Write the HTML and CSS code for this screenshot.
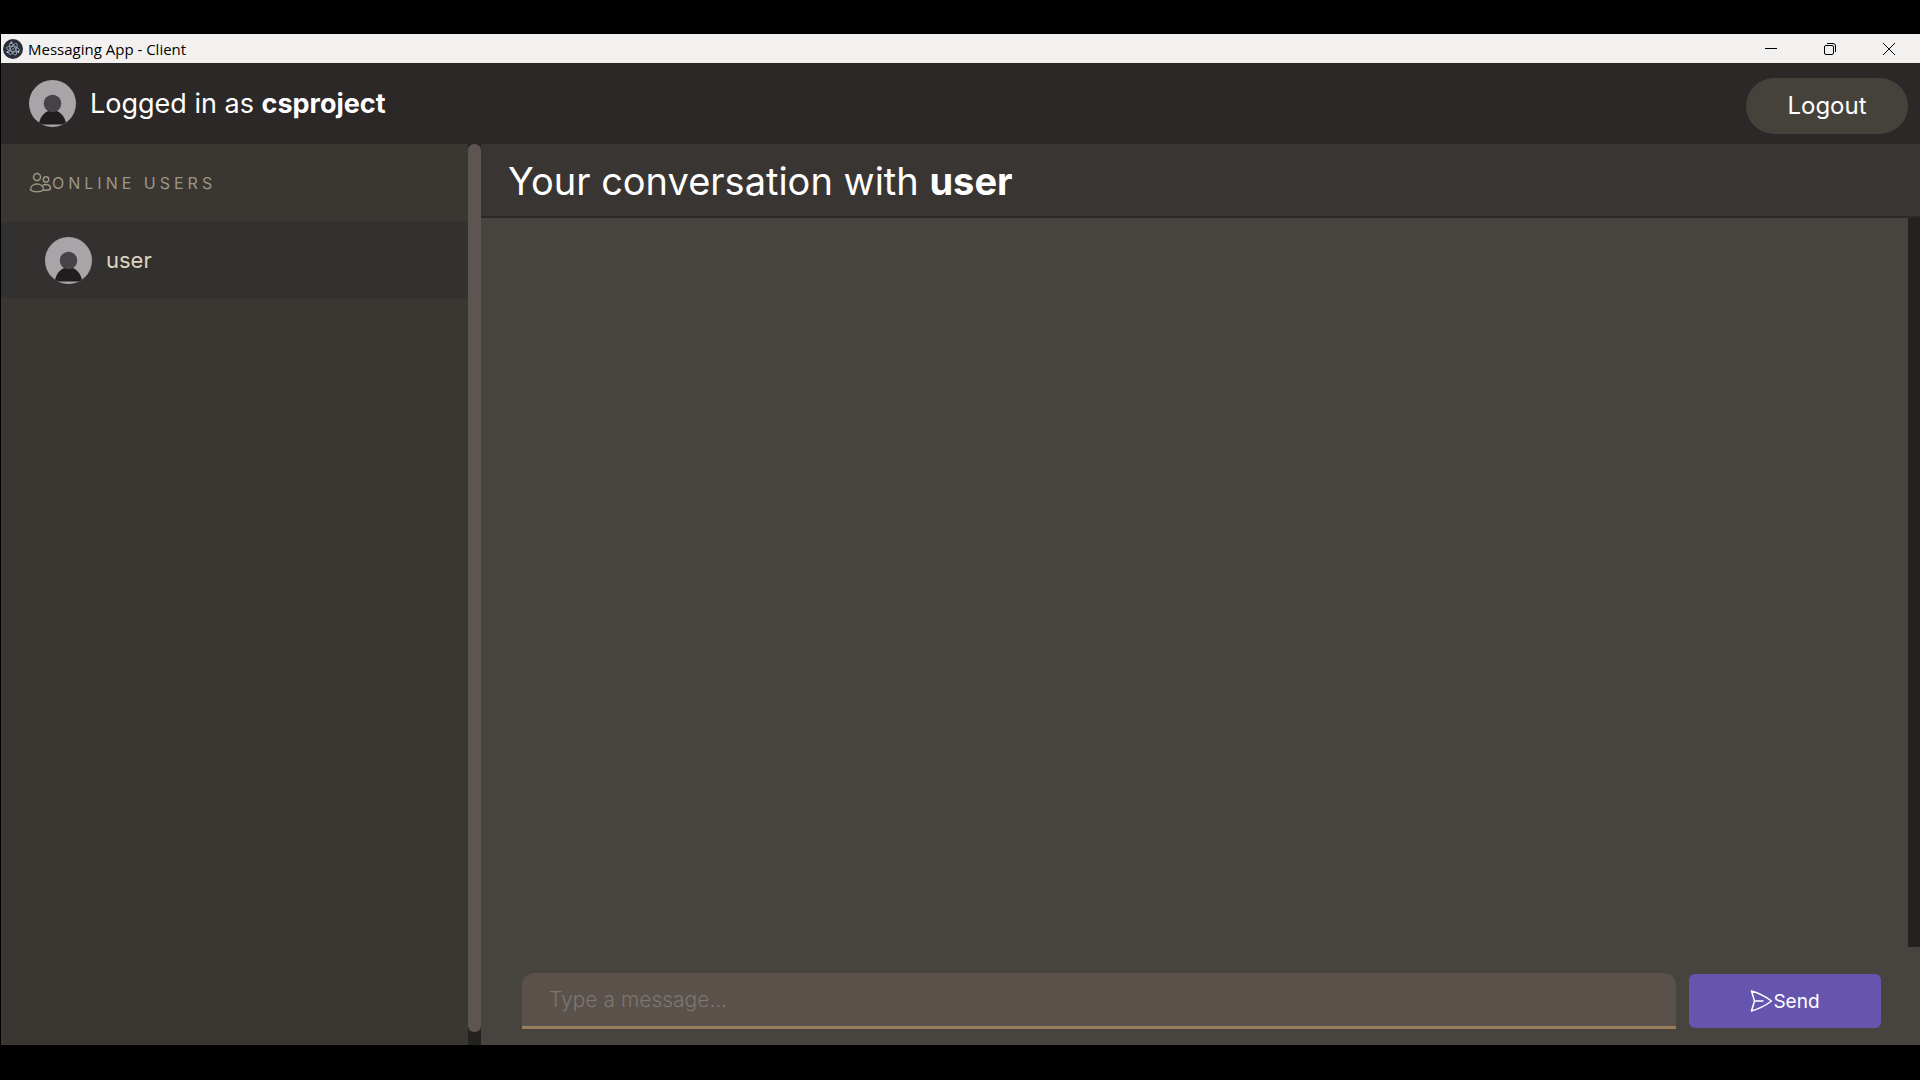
FILE: index.html
```html
<!DOCTYPE html>
<html lang="en">
<head>
<meta charset="utf-8">
<title>Messaging App - Client</title>
<link rel="stylesheet" href="styles.css">
</head>
<body>
<svg class="defs" aria-hidden="true">
  <symbol id="avatar" viewBox="0 0 48 48">
    <clipPath id="disc"><circle cx="24" cy="24" r="24"/></clipPath>
    <g clip-path="url(#disc)">
      <rect width="48" height="48" fill="#a8a5a9"/>
      <path d="M10 45.500C11 37 17 31 24 31s13 6 14 14.500z" fill="#211d1f"/>
      <circle cx="24" cy="24" r="9" fill="#454345"/>
    </g>
  </symbol>
</svg>
<div class="window">
  <div class="titlebar">
    <svg class="app-icon" viewBox="0 0 20 20" aria-hidden="true">
      <circle cx="10" cy="10" r="10" fill="#2b2e3a"/>
      <g fill="none" stroke="#9fb4bc" stroke-width="0.8">
        <ellipse cx="10" cy="10" rx="6.500" ry="2.600" transform="rotate(10 10 10)"/>
        <ellipse cx="10" cy="10" rx="6.500" ry="2.600" transform="rotate(65 10 10)"/>
        <ellipse cx="10" cy="10" rx="6.500" ry="2.600" transform="rotate(125 10 10)"/>
      </g>
      <g fill="#b9cbd1"><circle cx="10" cy="10" r="0.800"/><circle cx="4.500" cy="13" r="1"/><circle cx="15.500" cy="13" r="1"/><circle cx="8.500" cy="3.500" r="1"/></g>
    </svg>
    <span class="app-name">Messaging App - Client</span>
    <button class="window-button" aria-label="Minimize"><svg viewBox="0 0 14 14"><path d="M1 6.500h12"/></svg></button>
    <button class="window-button" aria-label="Restore"><svg viewBox="0 0 14 14"><rect x="1.500" y="3.500" width="9" height="9" rx="1.500"/><path d="M4 1.500h6a2.500 2.500 0 0 1 2.500 2.500v6"/></svg></button>
    <button class="window-button" aria-label="Close"><svg viewBox="0 0 14 14"><path d="M1 1l12 12M13 1L1 13"/></svg></button>
  </div>
  <header class="topbar">
    <svg class="avatar" aria-hidden="true"><use href="#avatar"/></svg>
    <span class="account">Logged in as <strong>csproject</strong></span>
    <button class="logout">Logout</button>
  </header>
  <div class="content">
    <aside class="sidebar">
      <h2 class="sidebar-title">
        <svg class="icon" viewBox="0 0 22 22" aria-hidden="true">
          <circle cx="7.500" cy="5" r="3.500"/>
          <path d="M1 18c0-3.500 2.500-6 6.500-6s6.500 2.500 6.500 6c-1.500 1.300-4 1.700-6.500 1.700S2.500 19.300 1 18z"/>
          <circle cx="16.500" cy="7.500" r="2.700"/>
          <path d="M12.800 13.800c1-.9 2.200-1.300 3.700-1.300 2.700 0 4.500 1.800 4.500 4.700-1.500 1-4 1.300-6.900 1"/>
        </svg>Online Users
      </h2>
      <a class="user-row" href="#user">
        <svg class="avatar" aria-hidden="true"><use href="#avatar"/></svg>
        <span>user</span>
      </a>
    </aside>
    <div class="sidebar-scroll"><div class="thumb"></div></div>
    <main class="chat">
      <h1 class="chat-title">Your conversation with <strong>user</strong></h1>
      <div class="messages"><div class="messages-track"></div></div>
      <form class="composer">
        <input class="message-input" type="text" placeholder="Type a message..." aria-label="Message">
        <button class="send" type="button">
          <svg class="icon" viewBox="0 0 22 22" aria-hidden="true"><path d="M1 1C8 3 15 6.500 21 11 15 15.500 8 19 1 21c1-3.500 2-6.500 3-10C3 7.500 2 4.500 1 1zM4 11h9"/></svg>Send
        </button>
      </form>
    </main>
  </div>
</div>
</body>
</html>
```
FILE: styles.css
```css
* {
  box-sizing: border-box;
}

body {
  display: flex;
  min-height: 100vh;
  margin: 0;
  padding: 34px 0 35px;
  background: #000;
  color: #fff;
  font-family: Inter, "Liberation Sans", sans-serif;
}

button,
input {
  border: 0;
  font-family: inherit;
}

.defs {
  position: absolute;
  width: 0;
  height: 0;
}

.window {
  flex: 1;
  display: flex;
  flex-direction: column;
  min-width: 0;
  padding-left: 1px;
}

.titlebar {
  display: flex;
  align-items: center;
  height: 29px;
  padding: 0 2px;
  background: #f3f1ef;
  color: #000;
  font: 15px/20px "Open Sans", sans-serif;
}

.app-icon {
  width: 20px;
  height: 20px;
}

.app-name {
  flex: 1;
  padding-left: 5px;
}

.window-button {
  display: flex;
  align-items: center;
  justify-content: center;
  width: 59px;
  height: 29px;
  padding: 0;
  background: none;
}

.window-button svg {
  width: 14px;
  height: 14px;
  fill: none;
  stroke: #000;
}

.topbar {
  display: flex;
  align-items: center;
  gap: 14px;
  height: 81px;
  padding: 0 12px 0 28px;
  background: #2b2827;
}

.avatar {
  flex: none;
  width: 47px;
  height: 47px;
}

.account {
  flex: 1;
  font-size: 27px;
}

.logout {
  width: 162px;
  height: 56px;
  margin-top: 4px;
  border-radius: 28px;
  background: #45423c;
  color: #fff;
  font-size: 24px;
}

.content {
  flex: 1;
  display: flex;
  min-height: 0;
}

.sidebar {
  flex: 0 1 467px;
  background: #3a3632;
}

.sidebar-title {
  display: flex;
  align-items: center;
  height: 78px;
  margin: 0;
  padding-left: 28px;
  color: #9b9686;
  font-size: 16px;
  font-weight: 400;
  letter-spacing: 4px;
  text-transform: uppercase;
}

.icon {
  flex: none;
  width: 23px;
  height: 22px;
  fill: none;
  stroke: currentColor;
  stroke-width: 1.5;
  stroke-linejoin: round;
}

.user-row {
  display: flex;
  align-items: center;
  gap: 14px;
  height: 76px;
  padding-left: 44px;
  background: #333130;
  color: #ddd5bf;
  font-size: 22px;
  text-decoration: none;
}

.sidebar-scroll {
  width: 13px;
  padding-bottom: 13px;
  background: #242220;
}

.thumb {
  height: 100%;
  border-radius: 6px;
  background: #5e5452;
}

.chat {
  flex: 1;
  display: flex;
  flex-direction: column;
  min-width: 0;
  background: #47433e;
}

.chat-title {
  height: 74px;
  margin: 0;
  padding-left: 27px;
  border-bottom: 2px solid #2c2927;
  background: #393533;
  font-size: 38px;
  font-weight: 400;
  line-height: 74px;
}

.messages {
  flex: 1;
  display: flex;
  justify-content: flex-end;
}

.messages-track {
  width: 12px;
  background: #242220;
}

.composer {
  display: flex;
  align-items: center;
  gap: 13px;
  padding: 26px 39px 16px 41px;
}

.message-input {
  flex: 1;
  min-width: 0;
  height: 56px;
  padding: 0 27px;
  border-bottom: 3px solid #9a7d5c;
  border-radius: 12px 12px 0 0;
  background: #5a514b;
  color: #fff;
  font-size: 21px;
  font-weight: 300;
}

.message-input::placeholder {
  color: #7b7673;
}

.send {
  display: flex;
  align-items: center;
  justify-content: center;
  width: 192px;
  height: 54px;
  border-radius: 6px;
  background: #6655ae;
  color: #fff;
  font-size: 19px;
}
```
